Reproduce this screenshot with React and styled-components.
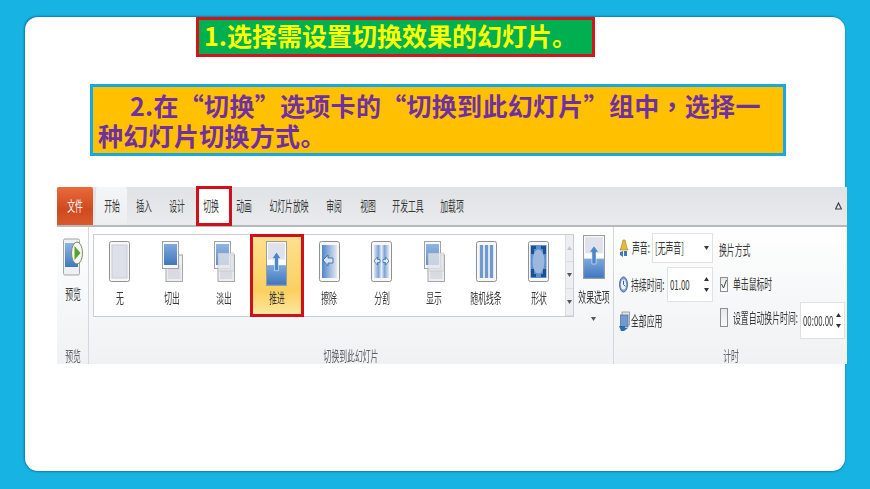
import React from 'react';
import styled, { createGlobalStyle } from 'styled-components';

const GlobalStyle = createGlobalStyle`
  html, body {
    margin: 0;
    padding: 0;
    background: #17b4e3;
  }
  body {
    font-family: "Noto Sans CJK SC", "Liberation Sans", sans-serif;
  }
`;

const Page = styled.div`
  width: 870px;
  height: 489px;
  box-sizing: border-box;
  padding: 17px 25px 18px;
  background: #17b4e3;
  overflow: hidden;
`;

const Card = styled.main`
  height: 454px;
  background: #fff;
  border-radius: 13px;
  box-shadow: -1px -1px 2px #0f7fa6, 0 1px 2px #0f7fa6;
`;

const StepOne = styled.h1`
  box-sizing: border-box;
  width: 399px;
  height: 40px;
  margin: 0 0 0 171px;
  padding-left: 5px;
  background: #00b050;
  border: 3px solid #d3141c;
  color: #ffff00;
  font-size: 25px;
  font-weight: 700;
  line-height: 30px;
  white-space: nowrap;
`;

const StepTwo = styled.div`
  box-sizing: border-box;
  width: 696px;
  height: 72px;
  margin: 27px 0 0 65px;
  padding: 3px 5px 0;
  background: #ffc000;
  border: 3px solid #14a9e2;
  color: #7030a0;
  font-size: 25px;
  font-weight: 700;
  line-height: 30px;
  letter-spacing: 0.3px;
`;

const StepLine = styled.div`
  padding-left: ${({ $indent }) => ($indent ? '32px' : '0')};
  white-space: nowrap;
`;

const Comma = styled.span`
  font-family: "Noto Sans CJK TC", sans-serif;
`;

const Ribbon = styled.section`
  width: 790px;
  height: 177px;
  margin: 31px 0 0 32px;
  background: linear-gradient(#ffffff 20%, #eff1f3 100%);
  color: #383838;
  filter: blur(0.35px);
`;

const TabBar = styled.nav`
  display: flex;
  height: 38px;
  box-sizing: content-box;
  border-bottom: 2px solid #b7babd;
  background: linear-gradient(#e0e3e6, #e9ebed);
`;

const FileTab = styled.div`
  width: 36px;
  margin-right: 3px;
  display: flex;
  align-items: center;
  justify-content: center;
  border-radius: 2px 2px 0 0;
  background: linear-gradient(#e96a3a, #cf4a20 60%, #d85a2c);
  color: #fff;
`;

const Tab = styled.div`
  position: relative;
  width: ${({ $w }) => $w}px;
  display: flex;
  align-items: center;
  justify-content: center;
  background: ${({ $active }) => ($active ? 'linear-gradient(#f4f5f6, #eceef0)' : 'transparent')};
  border-radius: 2px 2px 0 0;
  ${({ $marked }) =>
    $marked &&
    `
    &::before {
      content: '';
      position: absolute;
      left: 2px;
      top: -1px;
      width: 36px;
      height: 40px;
      box-sizing: border-box;
      border: 3px solid #d0101a;
      background: #fff;
    }
  `}
`;

const Label = styled.span`
  position: relative;
  display: block;
  box-sizing: content-box;
  width: ${({ $w }) => ($w ? `${$w}px` : 'max-content')};
  flex: none;
  padding-bottom: 2px;
  font-size: 14px;
  line-height: 16px;
  white-space: nowrap;
  transform: scaleX(0.56);
  transform-origin: ${({ $w }) => ($w ? 'left center' : 'center')};
`;

const Collapse = styled.div`
  margin-left: auto;
  width: 18px;
  display: flex;
  align-items: center;
  justify-content: center;
`;

const Body = styled.div`
  display: flex;
  height: 137px;
`;

const Group = styled.div`
  display: flex;
  flex-direction: column;
  box-sizing: border-box;
  width: ${({ $w }) => $w}px;
  border-right: ${({ $last }) => ($last ? 'none' : '1px solid #d5d8db')};
`;

const GroupContent = styled.div`
  flex: 1;
  display: flex;
  padding-top: 7px;
  min-height: 0;
`;

const GroupName = styled.div`
  height: 17px;
  display: flex;
  align-items: center;
  justify-content: center;
  color: #5f6164;
`;

const PreviewButton = styled.div`
  width: 100%;
  display: flex;
  flex-direction: column;
  align-items: center;
  gap: 9px;
  padding-top: 1px;
`;

const Gallery = styled.div`
  display: flex;
  box-sizing: border-box;
  width: 481.5px;
  height: 83px;
  margin-left: 3.5px;
  border: 1px solid #c9ccd0;
  background: #fff;
`;

const GalleryItem = styled.div`
  flex: 0 0 ${({ $selected }) => ($selected ? '54.4px' : '52.4px')};
  min-width: 0;
  display: flex;
  flex-direction: column;
  align-items: center;
  box-sizing: border-box;
  ${({ $selected }) =>
    $selected
      ? `
    margin: -1px;
    padding: 4px 0 9px;
    border: 3px solid #d0101a;
    background: linear-gradient(#fde08f, #fbd060 70%, #fde79d);
  `
      : `
    padding: 6px 0 11px;
  `}
`;

const ItemLabel = styled.div`
  margin-top: auto;
  height: 16px;
  display: flex;
  justify-content: center;
`;

const GalleryScroll = styled.div`
  margin-left: auto;
  width: 8px;
  display: flex;
  flex-direction: column;
  background: #eceef1;
  border-left: 1px solid #dcdfe2;
`;

const ScrollCell = styled.div`
  flex: 1;
  display: flex;
  align-items: center;
  justify-content: center;
  border-bottom: 1px solid #d9dce0;
  color: ${({ $muted }) => ($muted ? '#c4c7ca' : '#555')};
`;

const EffectOptions = styled.div`
  flex: 1;
  min-width: 0;
  display: flex;
  flex-direction: column;
  align-items: center;
  padding-top: 1px;
`;

const EffectLabel = styled.div`
  margin-top: 9px;
`;

const EffectArrow = styled.div`
  margin-top: 8px;
  color: #555;
  line-height: 0;
`;

const Timing = styled.div`
  display: flex;
  width: 100%;
  padding: 6px 0 0 5px;
  margin-top: -7px;
`;

const TimingLeft = styled.div`
  width: 94px;
  display: flex;
  flex-direction: column;
  gap: 4px;
`;

const TimingRight = styled.div`
  margin-left: 6px;
  flex: 1;
  display: flex;
  flex-direction: column;
`;

const FieldRow = styled.div`
  height: ${({ $h }) => $h}px;
  display: flex;
  align-items: center;
  justify-content: space-between;
`;

const FieldName = styled.div`
  display: flex;
  align-items: center;
  gap: 3px;
`;

const Field = styled.div`
  box-sizing: border-box;
  width: ${({ $w }) => $w}px;
  height: 100%;
  padding: 0 3px 0 2px;
  display: flex;
  align-items: center;
  justify-content: space-between;
  border: 1px solid #dfe1e4;
  background: #fff;
`;

const Spinner = styled.div`
  display: flex;
  flex-direction: column;
  gap: 7px;
  color: #333;
  line-height: 0;
`;

const ApplyAll = styled.div`
  margin-top: 5px;
  height: 20px;
  display: flex;
  align-items: center;
  gap: 1px;
`;

const Heading = styled.div`
  margin-top: 8px;
  height: 18px;
  display: flex;
  align-items: center;
`;

const CheckRow = styled.div`
  height: ${({ $h }) => $h}px;
  margin-top: ${({ $top }) => $top}px;
  display: flex;
  align-items: center;
  gap: 5px;
`;

const CheckGroup = styled.div`
  display: flex;
  align-items: center;
  gap: 5px;
  padding-bottom: 6px;
`;

const CheckBox = styled.div`
  box-sizing: border-box;
  width: 8px;
  height: ${({ $h }) => $h}px;
  flex: none;
  margin-left: 1px;
  display: flex;
  align-items: center;
  justify-content: center;
  border: 1px solid #8b8e92;
  background: linear-gradient(#e6e8ea, #fafafa);
`;

const Triangle = ({ up }) => (
  <svg width="5" height="4" viewBox="0 0 5 4">
    <path d={up ? 'M2.5 0 5 4H0z' : 'M0 0h5L2.5 4z'} fill="currentColor" />
  </svg>
);

const Frame = ({ w = 21, h = 41, children }) => (
  <svg width={w} height={h} viewBox="0 0 21 41" preserveAspectRatio="none" style={{ flex: 'none' }}>
    <defs>
      <linearGradient id="blue" x1="0" y1="0" x2="0" y2="1">
        <stop offset="0" stopColor="#7fa9dc" />
        <stop offset="1" stopColor="#3f77bd" />
      </linearGradient>
      <linearGradient id="wipe" x1="0" y1="0" x2="1" y2="0">
        <stop offset="0" stopColor="#4f86cb" />
        <stop offset="1" stopColor="#e4e8f0" />
      </linearGradient>
      <linearGradient id="split" x1="0" y1="0" x2="1" y2="0">
        <stop offset="0" stopColor="#dfe4ed" />
        <stop offset="0.3" stopColor="#7ea6da" />
        <stop offset="0.5" stopColor="#e8edf5" />
        <stop offset="0.7" stopColor="#7ea6da" />
        <stop offset="1" stopColor="#dfe4ed" />
      </linearGradient>
    </defs>
    {children}
  </svg>
);

const Slide = () => <rect x="0.5" y="0.5" width="20" height="40" rx="2" fill="#f7f7f8" stroke="#8f9092" />;

const PushArt = () => (
  <>
    <rect x="0.5" y="0.5" width="20" height="40" fill="#fff" stroke="#9a9c9f" />
    <rect x="2" y="2" width="17" height="15" fill="#dfe2ea" />
    <rect x="1" y="22" width="19" height="18" fill="url(#blue)" />
    <path d="M10.5 10 15 16h-2.5v11h-4V16H6z" fill="#4a86c8" stroke="#fff" strokeWidth="0.5" />
  </>
);

const TransitionArt = ({ kind }) => {
  if (kind === 'none') {
    return (
      <Frame>
        <Slide />
        <rect x="3" y="4" width="15" height="33" fill="#dde0e8" stroke="#c9ccd4" />
      </Frame>
    );
  }
  if (kind === 'cut' || kind === 'fade' || kind === 'reveal') {
    const pale = kind !== 'cut';
    return (
      <Frame>
        <rect x="4" y="14" width="16.5" height="26.5" fill="#eceef0" stroke="#a4a6a9" />
        <rect x="6" y="24" width="12.5" height="14" fill="#d9dbe0" />
        <rect x="0.5" y="0.5" width="16" height="27" fill="#f8f8f9" stroke="#a0a2a5" />
        <rect x="2" y="3" width="13" height="21" fill="url(#blue)" opacity={pale ? 0.85 : 1} />
        {pale && <rect x="4" y="12" width="16" height="18" fill="#e4e6ea" opacity="0.78" stroke="#b5b7ba" strokeWidth="0.6" />}
      </Frame>
    );
  }
  if (kind === 'push') {
    return (
      <Frame h={45}>
        <PushArt />
      </Frame>
    );
  }
  if (kind === 'wipe') {
    return (
      <Frame>
        <Slide />
        <rect x="3" y="4" width="15" height="33" fill="url(#wipe)" />
        <path d="M4 19l5-5v3h5v5H9v3z" fill="#d6e2f4" stroke="#2e66ad" strokeWidth="0.8" />
      </Frame>
    );
  }
  if (kind === 'split') {
    return (
      <Frame>
        <Slide />
        <rect x="3" y="4" width="15" height="33" fill="url(#split)" />
        <path d="M3 20l3.5-4v2.5H9v3H6.5V24zM18 20l-3.5-4v2.5H12v3h2.5V24z" fill="#e4ecf8" stroke="#2e66ad" strokeWidth="0.7" />
      </Frame>
    );
  }
  if (kind === 'bars') {
    return (
      <Frame>
        <Slide />
        <rect x="3" y="4" width="15" height="33" fill="#dfe4ee" />
        <rect x="4" y="4" width="3" height="33" fill="#6f9ad0" />
        <rect x="9" y="4" width="3" height="33" fill="#6f9ad0" />
        <rect x="14" y="4" width="3" height="33" fill="#6f9ad0" />
      </Frame>
    );
  }
  return (
    <Frame>
      <Slide />
      <rect x="2.5" y="4" width="16" height="33" fill="#5c8fd0" />
      <ellipse cx="10.5" cy="20.5" rx="6" ry="12" fill="#9cb8de" />
      <path d="M3 5h5v3H6v5H3zM18 5h-5v3h2v5h3zM3 36h5v-3H6v-5H3zM18 36h-5v-3h2v-5h3z" fill="#1f4f93" />
    </Frame>
  );
};

const PreviewIcon = () => (
  <svg width="20" height="41" viewBox="0 0 20 41" style={{ flex: 'none' }}>
    <defs>
      <linearGradient id="pv" x1="0" y1="0" x2="0" y2="1">
        <stop offset="0" stopColor="#8cb4e4" />
        <stop offset="1" stopColor="#3e78be" />
      </linearGradient>
    </defs>
    <rect x="0.5" y="4" width="16" height="36" rx="1.5" fill="#eef0f3" stroke="#a2a4a7" />
    <rect x="2" y="8" width="13" height="24" fill="url(#pv)" />
    <ellipse cx="14" cy="18" rx="5.5" ry="11" fill="#f6f8f2" stroke="#7d8f66" />
    <path d="M11.5 11v14l6-7z" fill="#5aa12f" />
  </svg>
);

const SoundIcon = () => (
  <svg width="10" height="19" viewBox="0 0 10 19" style={{ flex: 'none' }}>
    <path d="M4 1h2l2 8 1 2H1l1-2z" fill="#e9b93a" stroke="#a57a1a" strokeWidth="0.6" />
    <path d="M1 13l3-1v6l-3-2zM5 12h3v5H5z" fill="#3d78bd" />
  </svg>
);

const ClockIcon = () => (
  <svg width="9" height="17" viewBox="0 0 10 18" preserveAspectRatio="none" style={{ flex: 'none' }}>
    <ellipse cx="5" cy="9" rx="4.4" ry="8" fill="#7ea3d6" stroke="#41639c" />
    <ellipse cx="5" cy="9" rx="2.8" ry="5.4" fill="#eef3fa" />
    <path d="M5 5v4l2 2" stroke="#33528a" fill="none" />
  </svg>
);

const ApplyIcon = () => (
  <svg width="11" height="20" viewBox="0 0 11 20" style={{ flex: 'none' }}>
    <rect x="3" y="1" width="7.5" height="13" fill="#dfe3ea" stroke="#7f8388" strokeWidth="0.7" />
    <rect x="1.5" y="4" width="7.5" height="12" fill="#6f9ad3" stroke="#5a6a80" strokeWidth="0.7" />
    <path d="M0 15h6v2h3l-4 3H2z" fill="#2f6cb4" />
  </svg>
);

const tabs = [
  ['开始', 31],
  ['插入', 33],
  ['设计', 34],
  ['切换', 33],
  ['动画', 34],
  ['幻灯片放映', 56],
  ['审阅', 33],
  ['视图', 35],
  ['开发工具', 46],
  ['加载项', 42],
];

const transitions = [
  ['none', '无'],
  ['cut', '切出'],
  ['fade', '淡出'],
  ['push', '推进'],
  ['wipe', '擦除'],
  ['split', '分割'],
  ['reveal', '显示'],
  ['bars', '随机线条'],
  ['shape', '形状'],
];

const Spin = () => (
  <Spinner>
    <Triangle up />
    <Triangle />
  </Spinner>
);

export default function App() {
  return (
    <>
      <GlobalStyle />
      <Page>
        <Card>
          <StepOne>1.选择需设置切换效果的幻灯片。</StepOne>
          <StepTwo>
            <StepLine $indent>
              2.在“切换”选项卡的“切换到此幻灯片”组中<Comma>，</Comma>选择一
            </StepLine>
            <StepLine>种幻灯片切换方式。</StepLine>
          </StepTwo>
          <Ribbon>
            <TabBar>
              <FileTab>
                <Label>文件</Label>
              </FileTab>
              {tabs.map(([name, w]) => (
                <Tab key={name} $w={w} $active={name === '开始'} $marked={name === '切换'}>
                  <Label>{name}</Label>
                </Tab>
              ))}
              <Collapse>
                <svg width="7" height="8" viewBox="0 0 7 8">
                  <path d="M3.5 1 6.5 7h-6z" fill="none" stroke="#444" strokeWidth="1.2" />
                </svg>
              </Collapse>
            </TabBar>
            <Body>
              <Group $w={32}>
                <GroupContent>
                  <PreviewButton>
                    <PreviewIcon />
                    <Label>预览</Label>
                  </PreviewButton>
                </GroupContent>
                <GroupName>
                  <Label>预览</Label>
                </GroupName>
              </Group>
              <Group $w={525}>
                <GroupContent>
                  <Gallery>
                    {transitions.map(([kind, name]) => (
                      <GalleryItem key={kind} $selected={kind === 'push'}>
                        <TransitionArt kind={kind} />
                        <ItemLabel>
                          <Label>{name}</Label>
                        </ItemLabel>
                      </GalleryItem>
                    ))}
                    <GalleryScroll>
                      <ScrollCell $muted>
                        <Triangle up />
                      </ScrollCell>
                      <ScrollCell>
                        <Triangle />
                      </ScrollCell>
                      <ScrollCell>
                        <Triangle />
                      </ScrollCell>
                    </GalleryScroll>
                  </Gallery>
                  <EffectOptions>
                    <Frame w={22} h={44}>
                      <PushArt />
                    </Frame>
                    <EffectLabel>
                      <Label>效果选项</Label>
                    </EffectLabel>
                    <EffectArrow>
                      <Triangle />
                    </EffectArrow>
                  </EffectOptions>
                </GroupContent>
                <GroupName>
                  <Label>切换到此幻灯片</Label>
                </GroupName>
              </Group>
              <Group $w={233} $last>
                <GroupContent>
                  <Timing>
                    <TimingLeft>
                      <FieldRow $h={30}>
                        <FieldName>
                          <SoundIcon />
                          <Label $w={16}>声音:</Label>
                        </FieldName>
                        <Field $w={61}>
                          <Label $w={30}>[无声音]</Label>
                          <Triangle />
                        </Field>
                      </FieldRow>
                      <FieldRow $h={35}>
                        <FieldName>
                          <ClockIcon />
                          <Label $w={32}>持续时间:</Label>
                        </FieldName>
                        <Field $w={46}>
                          <Label $w={20}>01.00</Label>
                          <Spin />
                        </Field>
                      </FieldRow>
                      <ApplyAll>
                        <ApplyIcon />
                        <Label $w={32}>全部应用</Label>
                      </ApplyAll>
                    </TimingLeft>
                    <TimingRight>
                      <Heading>
                        <Label $w={32}>换片方式</Label>
                      </Heading>
                      <CheckRow $h={24} $top={13}>
                        <CheckBox $h={15}>
                          <svg width="6" height="10" viewBox="0 0 6 10">
                            <path d="M.5 5 2.5 9 5.5 1" fill="none" stroke="#444" strokeWidth="1" />
                          </svg>
                        </CheckBox>
                        <Label $w={38}>单击鼠标时</Label>
                      </CheckRow>
                      <CheckRow $h={37} $top={6}>
                        <CheckGroup>
                          <CheckBox $h={19} />
                          <Label $w={62}>设置自动换片时间:</Label>
                        </CheckGroup>
                        <Field $w={45}>
                          <Label $w={30}>00:00.00</Label>
                          <Spin />
                        </Field>
                      </CheckRow>
                    </TimingRight>
                  </Timing>
                </GroupContent>
                <GroupName>
                  <Label>计时</Label>
                </GroupName>
              </Group>
            </Body>
          </Ribbon>
        </Card>
      </Page>
    </>
  );
}
